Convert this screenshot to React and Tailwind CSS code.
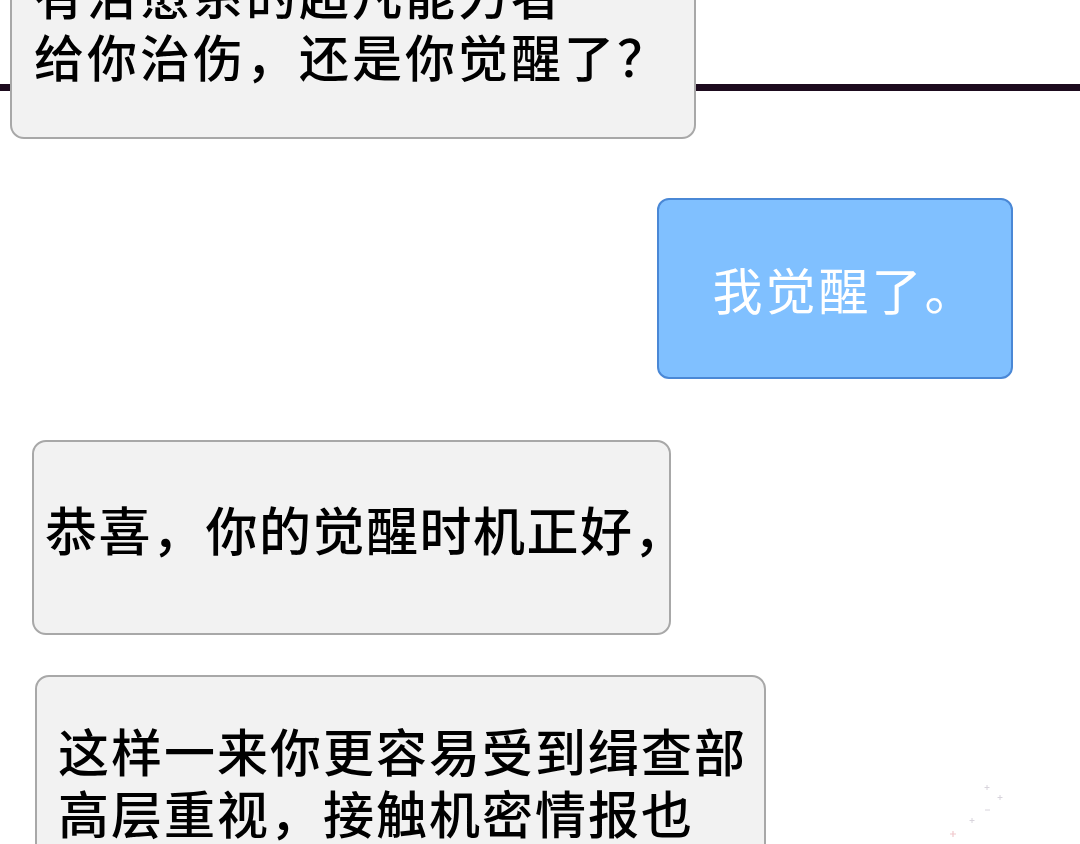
const cjk = { fontFamily: '"Noto Sans CJK SC", "Noto Sans", sans-serif' };

function Bubble({ className = "", children }) {
  return (
    <div
      className={`rounded-[14px] border-2 border-[#a8a8a8] bg-[#f2f2f2] font-medium whitespace-nowrap text-black ${className}`}
      style={cjk}
    >
      {children}
    </div>
  );
}

export default function App() {
  return (
    <div className="relative h-[844px] w-[1080px] overflow-hidden bg-white">
      {/* panel divider running behind the first bubble */}
      <div className="absolute left-0 right-0 top-[84px] h-[7px] bg-[#1d0b1e]" />

      <div className="relative flex flex-col">
        <Bubble className="ml-[10px] mt-[-92px] h-[231px] w-[686px] pl-[22px] pt-[52px] text-[50px] leading-[62px] tracking-[3px]">
          <p>有治愈系的超凡能力者</p>
          <p>给你治伤，还是你觉醒了？</p>
        </Bubble>

        <div
          className="ml-[657px] mt-[59px] flex h-[181px] w-[356px] items-center justify-center whitespace-nowrap rounded-[12px] border-2 border-[#4a88d6] bg-[#80c0ff] pl-[20px] text-[50px] tracking-[3px] text-white"
          style={cjk}
        >
          我觉醒了。
        </div>

        <Bubble className="ml-[32px] mt-[61px] flex h-[195px] w-[639px] items-center pb-[18px] pl-[11px] text-[52px] tracking-[1.5px]">
          恭喜，你的觉醒时机正好，
        </Bubble>

        <Bubble className="ml-[35px] mt-[40px] h-[240px] w-[731px] pl-[21px] pt-[42px] text-[51px] leading-[62px] tracking-[2px]">
          <p>这样一来你更容易受到缉查部</p>
          <p>高层重视，接触机密情报也</p>
        </Bubble>
      </div>

      {/* faint sparkle specks */}
      <svg className="absolute left-[940px] top-[775px]" width="80" height="69" viewBox="0 0 80 69">
        <g stroke="#d8d4dc" strokeWidth="1">
          <path d="M47 10v5M44.5 12.5h5" />
          <path d="M60 20v5M57.5 22.5h5" />
          <path d="M45 35h5" />
          <path d="M32 43v5M29.5 45.5h5" />
        </g>
        <path d="M13 56v6M10 59h6" stroke="#f0c8cc" strokeWidth="1.2" />
      </svg>
    </div>
  );
}
